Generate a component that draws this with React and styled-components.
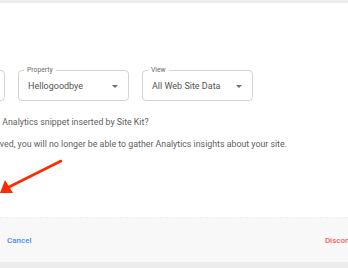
import React from "react";
import styled, { createGlobalStyle } from "styled-components";

const GlobalStyle = createGlobalStyle`
  html, body {
    margin: 0;
    padding: 0;
    background: #ffffff;
    overflow: hidden;
  }
  body {
    font-family: Roboto, "Liberation Sans", Arial, sans-serif;
  }
`;

const Page = styled.div`
  width: 348px;
  height: 268px;
  display: flex;
  flex-direction: column;
  overflow: hidden;
  background: #ececec;
`;

const Strip = styled.div`
  height: ${({ h }) => h}px;
  flex: none;
  background: #ececec;
`;

const Dialog = styled.div`
  flex: 1;
  display: flex;
  flex-direction: column;
  background: #ffffff;
  overflow: hidden;
`;

const Header = styled.div`
  height: 67px;
  display: flex;
  justify-content: flex-end;
  padding-top: 17px;
  box-sizing: border-box;
  overflow: hidden;
`;

const HeaderLink = styled.span`
  font-size: 9px;
  font-weight: 500;
  color: #4285f4;
  margin-right: -6px;
  white-space: nowrap;
`;

const Body = styled.div`
  flex: 1;
  margin-left: -106px;
  display: flex;
  flex-direction: column;
`;

const SelectRow = styled.div`
  display: flex;
  gap: 13px;
`;

const Select = styled.div`
  position: relative;
  width: 111px;
  height: 31px;
  box-sizing: border-box;
  border: 1px solid #d4d4d4;
  border-radius: 4px;
  display: flex;
  align-items: center;
  justify-content: space-between;
  padding: 1px 10px 0 9px;
`;

const SelectLabel = styled.span`
  position: absolute;
  top: -6px;
  left: 5px;
  padding: 0 3px;
  background: #ffffff;
  font-size: 6.8px;
  line-height: 10px;
  color: #6b6b6b;
`;

const SelectValue = styled.span`
  font-size: 9px;
  color: #555555;
  white-space: nowrap;
`;

const Caret = styled.span`
  width: 0;
  height: 0;
  border-left: 3.5px solid transparent;
  border-right: 3.5px solid transparent;
  border-top: 3.5px solid #6f6f6f;
`;

const Text = styled.p`
  margin: ${({ top }) => top}px 0 0 2px;
  font-size: 8.8px;
  line-height: 12px;
  color: #616161;
  white-space: nowrap;
`;

const ArrowArea = styled.div`
  flex: 1;
  margin-left: 106px;
  position: relative;
`;

const Arrow = styled.svg`
  position: absolute;
  left: 0;
  top: 9px;
`;

const Footer = styled.div`
  height: 45px;
  flex: none;
  background: #f8f8f8;
  border-top: 1px dashed #f0f0f0;
  box-sizing: border-box;
  display: flex;
  align-items: center;
  justify-content: space-between;
  padding: 0 0 0 7px;
  overflow: hidden;
`;

const FooterButton = styled.span`
  font-size: 8px;
  font-weight: 500;
  color: ${({ danger }) => (danger ? "#f0625b" : "#4a8af4")};
  white-space: nowrap;
  margin-right: ${({ danger }) => (danger ? "-17px" : "0")};
`;

const selects = [
  { label: "Account", value: "Site Kit" },
  { label: "Property", value: "Hellogoodbye" },
  { label: "View", value: "All Web Site Data" },
];

export default function App() {
  return (
    <>
      <GlobalStyle />
      <Page>
        <Strip h={3} />
        <Dialog>
          <Header>
            <HeaderLink>A</HeaderLink>
          </Header>
          <Body>
            <SelectRow>
              {selects.map((s) => (
                <Select key={s.label}>
                  <SelectLabel>{s.label}</SelectLabel>
                  <SelectValue>{s.value}</SelectValue>
                  <Caret />
                </Select>
              ))}
            </SelectRow>
            <Text top={15}>Do you want to remove the Analytics snippet inserted by Site Kit?</Text>
            <Text top={10}>
              If the code snippet is removed, you will no longer be able to gather Analytics insights about your site.
            </Text>
            <ArrowArea>
              <Arrow width="64" height="40" viewBox="0 0 64 40">
                <line x1="61" y1="2" x2="9" y2="28" stroke="#ff2a00" strokeWidth="2.6" strokeLinecap="round" />
                <polygon points="0,34 5,21 13,34" fill="#ff2a00" />
              </Arrow>
            </ArrowArea>
          </Body>
          <Footer>
            <FooterButton>Cancel</FooterButton>
            <FooterButton danger>Disconnect</FooterButton>
          </Footer>
        </Dialog>
        <Strip h={6} />
      </Page>
    </>
  );
}
